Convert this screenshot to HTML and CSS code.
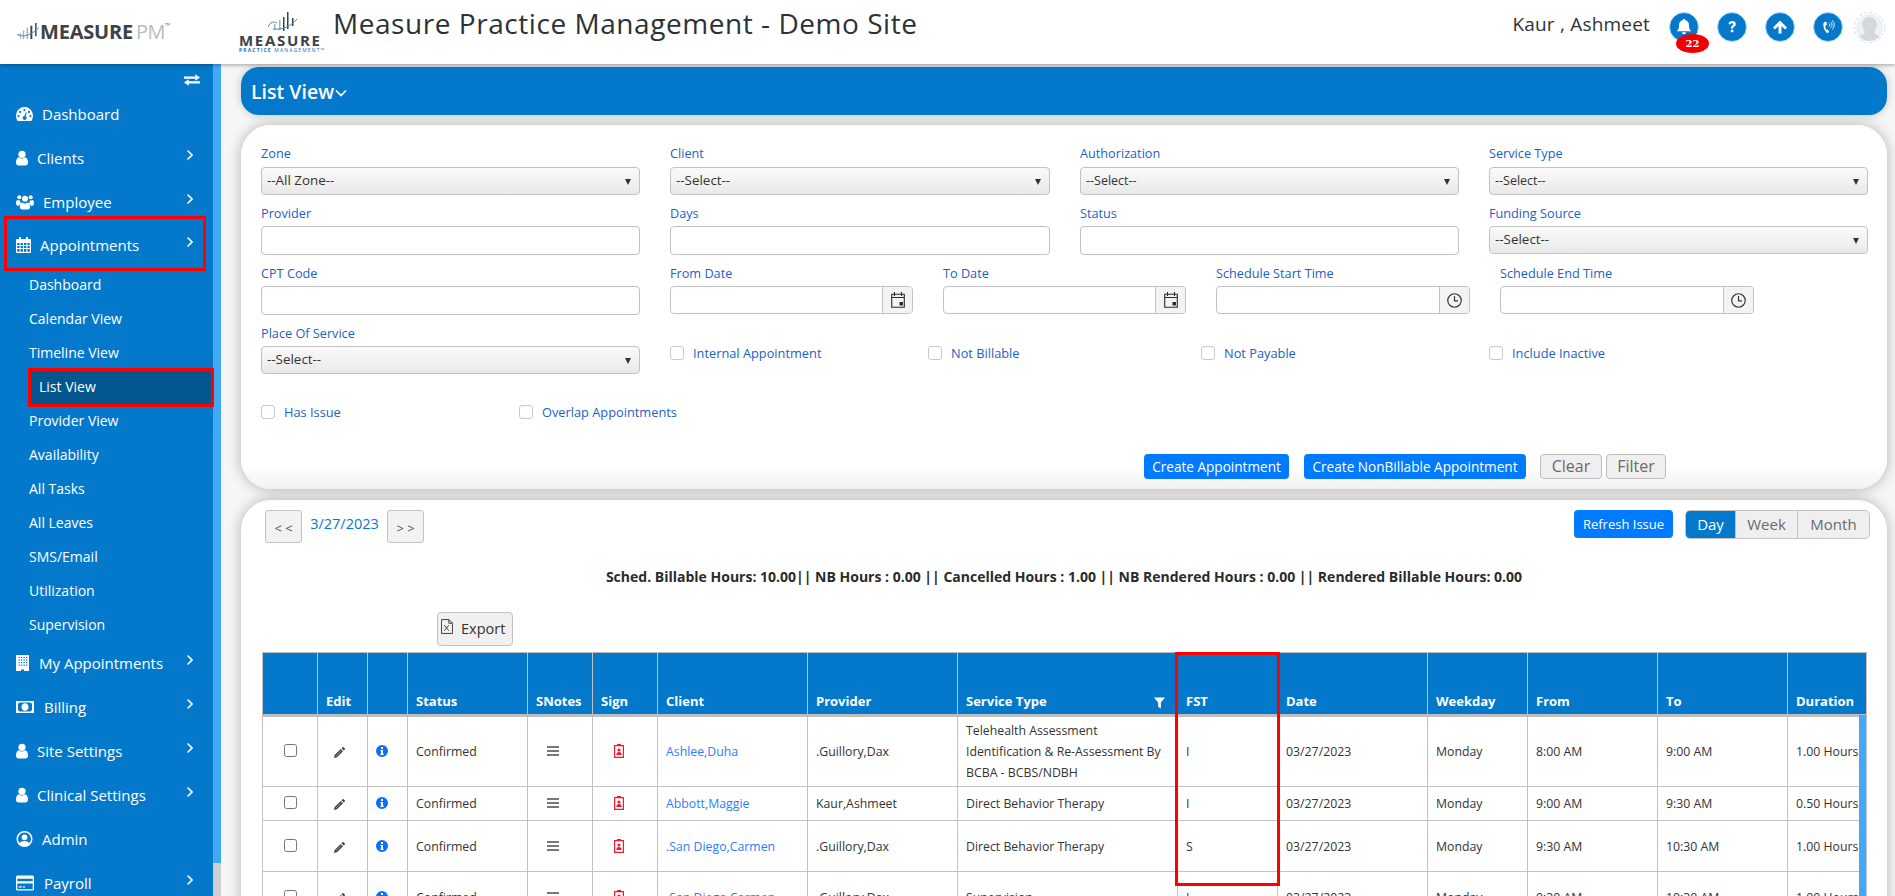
FILE: index.html
```html
<!DOCTYPE html>
<html lang="en">
<head>
<meta charset="utf-8">
<title>Measure Practice Management - List View</title>
<link rel="stylesheet" href="styles.css">
</head>
<body>
<svg class="defs" aria-hidden="true">
  <symbol id="i-user" viewBox="0 0 12 15"><circle cx="6" cy="3.8" r="3.6"/><path d="M0 12.2C0 9.3 1 7.2 3 6.8c.8.8 1.9 1.2 3 1.2s2.2-.4 3-1.2c2 .4 3 2.5 3 5.4 0 1.8-1.2 2.8-2.6 2.8H2.600C1.200 15 0 14 0 12.200z"/></symbol>
  <symbol id="i-users" viewBox="0 0 18 15"><circle cx="9" cy="4.200" r="3"/><circle cx="3.300" cy="2.800" r="2"/><circle cx="14.700" cy="2.800" r="2"/><path d="M0 8.500c0-2 .6-3 2-3 .6.500 1.500.8 2.200.5-.2 1.300.3 2.400 1.200 3.300C3.800 9.800 3 10.700 2.800 11.500 1 11.500 0 10.500 0 8.500zM18 8.500c0-2-.6-3-2-3-.6.500-1.500.8-2.200.5.200 1.300-.3 2.400-1.200 3.300 1.600.5 2.400 1.400 2.600 2.200 1.800 0 2.800-1 2.800-3zM3.800 12.500c0-2.500 1-4.300 2.500-4.500 1.500 1.200 3.900 1.200 5.400 0 1.500.2 2.500 2 2.500 4.500 0 1.600-1 2.500-2.300 2.500H6.100C4.800 15 3.800 14.100 3.800 12.500z"/></symbol>
  <symbol id="i-gauge" viewBox="0 0 17 14"><path fill-rule="evenodd" d="M8.500 0A8.500 8.500 0 0 0 0 8.500c0 2 .6 3.900 1.700 5.500h13.600c1.100-1.600 1.700-3.500 1.700-5.500A8.500 8.500 0 0 0 8.500 0zM8.500 2a1.100 1.100 0 1 1 0 2.200 1.100 1.100 0 0 1 0-2.200zM4 3.800a1.100 1.100 0 1 1 0 2.200 1.100 1.100 0 0 1 0-2.200zM13 3.800a1.100 1.100 0 1 1 0 2.200 1.100 1.100 0 0 1 0-2.200zM2.500 8a1.100 1.100 0 1 1 0 2.200 1.100 1.100 0 0 1 0-2.200zM14.500 8a1.100 1.100 0 1 1 0 2.200 1.100 1.100 0 0 1 0-2.200zM10.800 5.500 9.700 9.200a2 2 0 1 1-1.300-.3l1.400-3.700z"/></symbol>
  <symbol id="i-cal" viewBox="0 0 15 16"><path fill-rule="evenodd" d="M3 0h2v2h5V0h2v2h2a1 1 0 0 1 1 1v12a1 1 0 0 1-1 1H1a1 1 0 0 1-1-1V3a1 1 0 0 1 1-1h2zM1.200 6v2h2.400V6zM4.600 6v2h2.400V6zM8 6v2h2.400V6zM11.400 6v2h2.400V6zM1.200 9v2h2.400V9zM4.600 9v2h2.400V9zM8 9v2h2.400V9zM11.400 9v2h2.400V9zM1.200 12v2.800h2.400V12zM4.600 12v2.800h2.400V12zM8 12v2.800h2.400V12zM11.400 12v2.800h2.400V12z"/></symbol>
  <symbol id="i-building" viewBox="0 0 13 16"><path fill-rule="evenodd" d="M0 0h13v16H8v-1.500H5V16H0zM2.500 2v1.200h1.300V2zM5 2v1.200h1.300V2zM7.500 2v1.200h1.300V2zM10 2v1.200h1.300V2zM2.500 4.500v1.200h1.300V4.500zM5 4.500v1.200h1.300V4.500zM7.500 4.500v1.200h1.300V4.500zM10 4.500v1.200h1.300V4.500zM2.500 7v1.200h1.300V7zM5 7v1.200h1.300V7zM7.500 7v1.200h1.300V7zM10 7v1.200h1.300V7zM2.500 9.500v1.200h1.300V9.500zM5 9.500v1.200h1.300V9.500zM7.500 9.500v1.200h1.300V9.500zM10 9.500v1.200h1.300V9.500z"/></symbol>
  <symbol id="i-money" viewBox="0 0 18 12"><path fill-rule="evenodd" d="M0 0h18v12H0zM2 2.400v7.200a2 2 0 0 1 1.500 1h11a2 2 0 0 1 1.500-1V2.400a2 2 0 0 1-1.500-1h-11a2 2 0 0 1-1.500 1zM9 2.200c2 0 3.500 1.700 3.500 3.800S11 9.800 9 9.800 5.500 8.100 5.500 6 7 2.200 9 2.200z"/><path d="M8 4.200h1.600v3.200h.6v.9H7.800v-.9h.7V5.100H8z"/></symbol>
  <symbol id="i-circle-user" viewBox="0 0 16 16"><path fill-rule="evenodd" d="M8 0a8 8 0 1 1 0 16A8 8 0 0 1 8 0zM8 1.600a6.400 6.400 0 0 0-4.900 10.500C4 10.700 5.800 10 8 10s4 .7 4.900 2.100A6.400 6.400 0 0 0 8 1.600zM8 3.400a2.900 2.900 0 1 1 0 5.800 2.900 2.900 0 0 1 0-5.800z"/></symbol>
  <symbol id="i-card" viewBox="0 0 18 15"><path fill-rule="evenodd" d="M1.500 0h15A1.500 1.500 0 0 1 18 1.500v12a1.500 1.500 0 0 1-1.500 1.500h-15A1.500 1.500 0 0 1 0 13.500v-12A1.500 1.500 0 0 1 1.500 0zM1.300 3.200v2.600h15.400V3.200zM1.300 8v5.700h15.400V8zM2.800 10.800h3v1.200h-3zM7 10.800h2v1.200H7z"/></symbol>
  <symbol id="i-pencil" viewBox="0 0 12 12"><path d="M0 12l.7-3.200 6.700-6.700 2.500 2.500-6.700 6.700zM8.200 1.300 9.300.2c.3-.3.700-.3 1 0l1.500 1.500c.3.300.3.700 0 1l-1.100 1.100z"/><path d="M2 9.900 8 3.900" stroke="#bbb" stroke-width=".7" fill="none"/></symbol>
  <symbol id="i-info" viewBox="0 0 12 12"><path fill-rule="evenodd" d="M6 0a6 6 0 1 1 0 12A6 6 0 0 1 6 0zM5 2v2h2V2zM4.400 5v1.100H5v2.700h-.6V10h3.200V8.800H7V5z"/></symbol>
  <symbol id="i-sign" viewBox="0 0 10 14"><path fill-rule="evenodd" d="M0 1h3V0h4v1h3v13H0zM1.200 2.200v10.600h7.600V2.200z"/><circle cx="5" cy="6" r="1.600"/><path d="M2.300 11c0-2 1-3 2.700-3s2.700 1 2.700 3z"/></symbol>
  <symbol id="i-xls" viewBox="0 0 13 16"><path fill="none" stroke="currentColor" d="M.5.500h8l4 4v11H.5zM8.500.500v4h4"/><path fill="none" stroke="currentColor" d="M3.500 6.500l5 6M8.500 6.500l-5 6"/></symbol>
  <symbol id="i-dcal" viewBox="0 0 14 16"><path fill="none" stroke="#2b2b2b" stroke-width="1.100" d="M.7 2.200h12.600v13.100H.7zM3.500 0v4M10.500 0v4"/><path fill="#2b2b2b" d="M.7 5h12.600v1H.7zM8.500 10h3.500v3.500H8.500z"/></symbol>
  <symbol id="i-clock" viewBox="0 0 14 14"><circle cx="7" cy="7" r="6.300" fill="none" stroke="#333" stroke-width="1.100"/><path fill="none" stroke="#333" stroke-width="1.100" d="M7 2.800V7.400H10.300"/></symbol>
  <symbol id="i-chev" viewBox="0 0 6 10"><path fill="none" stroke="currentColor" stroke-width="1.600" stroke-linecap="round" d="M1 1l4 4-4 4"/></symbol>
  <symbol id="i-bars" viewBox="0 0 12 10"><path d="M0 0h12v2H0zM0 4h12v2H0zM0 8h12v2H0z"/></symbol>
</svg>

<header class="topbar">
  <div class="logo-pm">
    <svg class="logo-pm-mark" viewBox="0 0 24 20"><path class="mark-gray" d="M1 14l3-3v7H3v-4zM6 9h1.500v9H6zM10 6h1.500v12H10z"/><path class="mark-dark" d="M14 4h2v14h-2zM19 1h1.500v14H19z"/><path class="mark-line" d="M0 13c7 4 16 0 23-7" fill="none"/></svg>
    <span class="logo-pm-a">MEASURE</span><span class="logo-pm-b">PM</span><span class="logo-pm-tm">™</span>
  </div>
  <div class="logo-mp">
    <svg class="logo-mp-mark" viewBox="0 0 30 22"><path class="mark-gray" d="M6 12h1.500v6H6zM11 8h1.500v10H11z"/><path class="mark-dark" d="M15 5h1.500v14H15zM19 0h1.500v17H19zM24 6h1.500v8H24z"/><path class="mark-line" d="M0 15c2-5 6-6 9-4M5 17c9 1 17-2 24-10" fill="none"/></svg>
    <div class="logo-mp-a">MEASURE</div>
    <div class="logo-mp-b">PRACTICE <span>MANAGEMENT™</span></div>
  </div>
  <h1 class="site-title">Measure Practice Management - Demo Site</h1>
  <div class="user-name">Kaur , Ashmeet</div>
  <div class="top-icons">
    <div class="round-btn">
      <svg viewBox="0 0 16 16"><path d="M8 0c.7 0 1.100.5 1.100 1.100C11.500 1.700 13 3.700 13 6.200c0 4 1.200 4.800 2.200 6H.8c1-1.200 2.200-2 2.200-6 0-2.500 1.500-4.500 3.900-5.100C6.900.5 7.300 0 8 0zM6 13.200h4a2 2 0 0 1-4 0z"/></svg>
      <span class="badge">22</span>
    </div>
    <div class="round-btn"><svg viewBox="0 0 16 16"><path d="M4.500 5.300C4.600 3 6.200 2 8.200 2c2.200 0 3.600 1.300 3.600 3 0 1.500-.9 2.200-1.700 2.800-.7.500-.9.800-.9 1.700H6.900c0-1.500.4-2.200 1.300-2.900.7-.5 1-.9 1-1.400 0-.6-.4-1-1.100-1-.8 0-1.200.5-1.300 1.100zM6.800 10.700h2.500V13.200H6.800z"/></svg></div>
    <div class="round-btn"><svg viewBox="0 0 16 16"><path d="M8 1.500 15 8.500 13 10.500 9.500 7v7.500h-3V7L3 10.500 1 8.500z"/></svg></div>
    <div class="round-btn"><svg viewBox="0 0 16 16"><path d="M5.500 2.500 3.800 3.500C2.600 6.500 4 11 6.800 14l2-.6c.4-.2.400-.5.300-.8L8 10.700c-.2-.3-.4-.3-.7-.2l-.8.400c-.9-1.300-1.300-2.900-1-4.400l.9-.2c.3-.1.400-.3.400-.6l-.1-2.400c0-.3-.4-.5-.7-.3z"/><path class="ring" d="M9 4.500c1 .7 1 2.300 0 3M10.500 3c2 1.400 2 4.300 0 5.800M12 1.500c3 2.200 3 6.600 0 8.800"/></svg></div>
    <div class="avatar"><svg viewBox="0 0 28 28"><circle cx="14" cy="14" r="14" fill="#eef0f2"/><path fill="#d3d8dc" d="M14 3c4.500 0 7.500 3.500 7.500 8 0 3-1 5.500-3 7.500 0 1.500 1 2.200 3.500 3.200 1 .4 2 1 2.500 1.600A13.500 13.500 0 0 1 14 28a13.500 13.500 0 0 1-10.500-4.700c.5-.6 1.500-1.200 2.500-1.600 2.500-1 3.500-1.700 3.500-3.200-2-2-3-4.500-3-7.500C6.500 6.500 9.500 3 14 3z"/></svg></div>
  </div>
</header>

<div class="shell">
  <aside class="sidebar">
    <nav class="nav">
      <div class="nav-toggle"><svg viewBox="0 0 17 12"><path d="M0 2.200h12V0l5 3.400-5 3.400V4.600H0zM17 7.400H5V5.200L0 8.600 5 12V9.800h12z"/></svg></div>
      <a class="nav-item"><svg class="ni w17"><use href="#i-gauge"/></svg>Dashboard</a>
      <a class="nav-item"><svg class="ni w12"><use href="#i-user"/></svg>Clients<svg class="chev"><use href="#i-chev"/></svg></a>
      <a class="nav-item"><svg class="ni w18 tight"><use href="#i-users"/></svg>Employee<svg class="chev"><use href="#i-chev"/></svg></a>
      <a class="nav-item marked"><svg class="ni w15"><use href="#i-cal"/></svg>Appointments<svg class="chev"><use href="#i-chev"/></svg></a>
      <div class="sub">
        <a class="sub-item">Dashboard</a>
        <a class="sub-item">Calendar View</a>
        <a class="sub-item">Timeline View</a>
        <a class="sub-item active">List View</a>
        <a class="sub-item">Provider View</a>
        <a class="sub-item">Availability</a>
        <a class="sub-item">All Tasks</a>
        <a class="sub-item">All Leaves</a>
        <a class="sub-item">SMS/Email</a>
        <a class="sub-item">Utilization</a>
        <a class="sub-item">Supervision</a>
      </div>
      <a class="nav-item"><svg class="ni w13"><use href="#i-building"/></svg>My Appointments<svg class="chev"><use href="#i-chev"/></svg></a>
      <a class="nav-item"><svg class="ni w18"><use href="#i-money"/></svg>Billing<svg class="chev"><use href="#i-chev"/></svg></a>
      <a class="nav-item"><svg class="ni w12"><use href="#i-user"/></svg>Site Settings<svg class="chev"><use href="#i-chev"/></svg></a>
      <a class="nav-item"><svg class="ni w12"><use href="#i-user"/></svg>Clinical Settings<svg class="chev"><use href="#i-chev"/></svg></a>
      <a class="nav-item"><svg class="ni w17"><use href="#i-circle-user"/></svg>Admin</a>
      <a class="nav-item"><svg class="ni w18"><use href="#i-card"/></svg>Payroll<svg class="chev"><use href="#i-chev"/></svg></a>
    </nav>
    <div class="side-scroll"><div class="side-thumb"></div></div>
  </aside>

  <main class="main">
    <div class="page-bar">List View<svg class="bar-chev" viewBox="0 0 12 8"><path d="M1 1.500l5 5 5-5" fill="none" stroke="#fff" stroke-width="1.700"/></svg></div>

    <section class="card filter-card">
      <div class="f-row four first">
        <div class="field"><label>Zone</label><div class="sel">--All Zone--<i class="caret"></i></div></div>
        <div class="field"><label>Client</label><div class="sel">--Select--<i class="caret"></i></div></div>
        <div class="field"><label>Authorization</label><div class="sel sm">--Select--<i class="caret"></i></div></div>
        <div class="field"><label>Service Type</label><div class="sel sm">--Select--<i class="caret"></i></div></div>
      </div>
      <div class="f-row four">
        <div class="field"><label>Provider</label><div class="inp"></div></div>
        <div class="field"><label>Days</label><div class="inp"></div></div>
        <div class="field"><label>Status</label><div class="inp"></div></div>
        <div class="field"><label>Funding Source</label><div class="sel">--Select--<i class="caret"></i></div></div>
      </div>
      <div class="f-row dates">
        <div class="field"><label>CPT Code</label><div class="inp"></div></div>
        <div class="field"><label>From Date</label><div class="inp-group"><div class="grow"></div><div class="addon"><svg class="dcal"><use href="#i-dcal"/></svg></div></div></div>
        <div class="field"><label>To Date</label><div class="inp-group"><div class="grow"></div><div class="addon"><svg class="dcal"><use href="#i-dcal"/></svg></div></div></div>
        <div class="field"><label>Schedule Start Time</label><div class="inp-group"><div class="grow"></div><div class="addon"><svg class="clock"><use href="#i-clock"/></svg></div></div></div>
        <div class="field"><label>Schedule End Time</label><div class="inp-group"><div class="grow"></div><div class="addon"><svg class="clock"><use href="#i-clock"/></svg></div></div></div>
      </div>
      <div class="f-row checks">
        <div class="field"><label>Place Of Service</label><div class="sel">--Select--<i class="caret"></i></div></div>
        <label class="chk"><input type="checkbox">Internal Appointment</label>
        <label class="chk"><input type="checkbox">Not Billable</label>
        <label class="chk"><input type="checkbox">Not Payable</label>
        <label class="chk"><input type="checkbox">Include Inactive</label>
      </div>
      <div class="f-row issue">
        <label class="chk"><input type="checkbox">Has Issue</label>
        <label class="chk"><input type="checkbox">Overlap Appointments</label>
      </div>
      <div class="actions">
        <button class="btn primary">Create Appointment</button>
        <button class="btn primary">Create NonBillable Appointment</button>
        <button class="btn plain">Clear</button>
        <button class="btn plain">Filter</button>
      </div>
    </section>

    <section class="card list-card">
      <div class="list-top">
        <button class="pager">&lt; &lt;</button>
        <span class="cur-date">3/27/2023</span>
        <button class="pager next">&gt; &gt;</button>
        <button class="btn primary refresh">Refresh Issue</button>
        <div class="seg"><span class="on">Day</span><span>Week</span><span>Month</span></div>
      </div>
      <div class="summary">Sched. Billable Hours: 10.00|| NB Hours : 0.00 || Cancelled Hours : 1.00 || NB Rendered Hours : 0.00 || Rendered Billable Hours: 0.00</div>
      <button class="export"><svg class="xls"><use href="#i-xls"/></svg>Export</button>
      <div class="table-wrap">
        <table class="grid">
          <colgroup>
            <col class="c55"><col class="c50"><col class="c40"><col class="c120"><col class="c65"><col class="c65"><col class="c150"><col class="c150"><col class="c220"><col class="c100"><col class="c150"><col class="c100"><col class="c130"><col class="c130"><col class="c79">
          </colgroup>
          <thead>
            <tr><th></th><th>Edit</th><th></th><th>Status</th><th>SNotes</th><th>Sign</th><th>Client</th><th>Provider</th><th><div class="th-flex">Service Type<svg class="funnel" viewBox="0 0 12 12"><path d="M0 0h12L7.500 5.500V12L4.500 10V5.500z"/></svg></div></th><th>FST</th><th>Date</th><th>Weekday</th><th>From</th><th>To</th><th>Duration</th></tr>
          </thead>
          <tbody>
            <tr class="r71"><td class="ctr"><input type="checkbox"></td><td class="ctr"><svg class="pencil"><use href="#i-pencil"/></svg></td><td class="ctr"><svg class="info"><use href="#i-info"/></svg></td><td>Confirmed</td><td class="ctr"><svg class="bars"><use href="#i-bars"/></svg></td><td class="ctr"><svg class="sign"><use href="#i-sign"/></svg></td><td><a class="lnk">Ashlee,Duha</a></td><td>.Guillory,Dax</td><td>Telehealth Assessment Identification &amp; Re-Assessment By BCBA - BCBS/NDBH</td><td>I</td><td>03/27/2023</td><td>Monday</td><td>8:00 AM</td><td>9:00 AM</td><td>1.00 Hours</td></tr>
            <tr class="r34"><td class="ctr"><input type="checkbox"></td><td class="ctr"><svg class="pencil"><use href="#i-pencil"/></svg></td><td class="ctr"><svg class="info"><use href="#i-info"/></svg></td><td>Confirmed</td><td class="ctr"><svg class="bars"><use href="#i-bars"/></svg></td><td class="ctr"><svg class="sign"><use href="#i-sign"/></svg></td><td><a class="lnk">Abbott,Maggie</a></td><td>Kaur,Ashmeet</td><td>Direct Behavior Therapy</td><td>I</td><td>03/27/2023</td><td>Monday</td><td>9:00 AM</td><td>9:30 AM</td><td>0.50 Hours</td></tr>
            <tr class="r50"><td class="ctr"><input type="checkbox"></td><td class="ctr"><svg class="pencil"><use href="#i-pencil"/></svg></td><td class="ctr"><svg class="info"><use href="#i-info"/></svg></td><td>Confirmed</td><td class="ctr"><svg class="bars"><use href="#i-bars"/></svg></td><td class="ctr"><svg class="sign"><use href="#i-sign"/></svg></td><td><a class="lnk">.San Diego,Carmen</a></td><td>.Guillory,Dax</td><td>Direct Behavior Therapy</td><td>S</td><td>03/27/2023</td><td>Monday</td><td>9:30 AM</td><td>10:30 AM</td><td>1.00 Hours</td></tr>
            <tr class="r50"><td class="ctr"><input type="checkbox"></td><td class="ctr"><svg class="pencil"><use href="#i-pencil"/></svg></td><td class="ctr"><svg class="info"><use href="#i-info"/></svg></td><td>Confirmed</td><td class="ctr"><svg class="bars"><use href="#i-bars"/></svg></td><td class="ctr"><svg class="sign"><use href="#i-sign"/></svg></td><td><a class="lnk">.San Diego,Carmen</a></td><td>.Guillory,Dax</td><td>Supervision</td><td>I</td><td>03/27/2023</td><td>Monday</td><td>9:30 AM</td><td>10:30 AM</td><td>1.00 Hours</td></tr>
          </tbody>
        </table>
        <div class="fst-mark"></div>
        <div class="table-scroll"></div>
      </div>
    </section>
  </main>
</div>
</body>
</html>
```

FILE: styles.css
```css
* { box-sizing: border-box; }
html, body { margin: 0; height: 896px; overflow: hidden; }
body { font-family: "Open Sans", "Noto Sans", sans-serif; background: #f6f6f6; color: #333; display: flex; flex-direction: column; }
.defs { position: absolute; width: 0; height: 0; }

/* top bar */
.topbar { height: 64px; flex: none; background: #fff; display: flex; align-items: flex-start; position: relative; z-index: 3; box-shadow: 0 1px 4px rgba(0,0,0,.35); }
.logo-pm { margin: 21px 0 0 17px; width: 222px; height: 20px; display: flex; align-items: center; font-weight: 700; }
.logo-pm-mark { width: 23px; height: 19px; flex: none; }
.logo-pm-a { font-size: 20px; color: #3b4248; letter-spacing: -.2px; }
.logo-pm-b { font-size: 20px; color: #b9bdc0; margin-left: 3px; letter-spacing: -.6px; font-weight: 400; }
.logo-pm-tm { font-size: 7px; color: #888; align-self: flex-start; }
.mark-gray { fill: #a8adb2; }
.mark-dark { fill: #3b4248; }
.mark-line { stroke: #3a8cc8; stroke-width: 1; }
.logo-mp { width: 94px; margin-top: 12px; flex: none; }
.logo-mp-mark { display: block; width: 30px; height: 22px; margin-left: 29px; }
.logo-mp-a { font-size: 15px; font-weight: 700; color: #3b4248; line-height: 13px; letter-spacing: 1.7px; }
.logo-mp-b { font-size: 5px; font-weight: 700; color: #1f6fb5; line-height: 7px; letter-spacing: 1.15px; white-space: nowrap; }
.logo-mp-b span { font-weight: 400; }
.site-title { margin: 4px 0 0 0; font-size: 28px; line-height: 38px; font-weight: 400; color: #2a3238; letter-spacing: .55px; white-space: nowrap; }
.user-name { margin-left: auto; margin-top: 12px; font-size: 19px; line-height: 25px; color: #2f3338; letter-spacing: .2px; white-space: nowrap; }
.top-icons { display: flex; margin: 12px 10px 0 19px; }
.round-btn { position: relative; width: 30px; height: 30px; margin-right: 18px; border-radius: 50%; background: #0479cc; border: 1px solid #bcdcf3; display: flex; align-items: center; justify-content: center; }
.round-btn svg { width: 16px; height: 16px; fill: #fff; }
.round-btn .ring { fill: none; stroke: #fff; stroke-width: .9; }
.badge { position: absolute; left: 6px; top: 21px; width: 33px; height: 19px; border-radius: 50%; background: #f20000; color: #fff; font: 700 10px/19px "DejaVu Serif", serif; text-align: center; }
.avatar { width: 31px; height: 31px; margin: 0 0 0 -7px; border-radius: 50%; border: 1px dashed #c9e0f2; padding: 1px; }
.avatar svg { display: block; width: 27px; height: 27px; }

.shell { flex: 1; min-height: 0; display: flex; }

/* sidebar */
.sidebar { width: 221px; flex: none; display: flex; background: #0479cc; color: #fff; overflow: hidden; }
.nav { width: 213px; flex: none; }
.nav-toggle { height: 28px; padding: 10px 0 0 184px; }
.nav-toggle svg { display: block; width: 16px; height: 12px; fill: #fff; }
.nav-item { position: relative; display: flex; align-items: center; height: 44px; padding: 0 20px 0 16px; font-size: 15px; white-space: nowrap; color: #fff; }
.marked { padding-bottom: 2px; }
.ni { flex: none; height: 16px; margin-right: 10px; fill: #fff; }
.w12 { width: 12px; margin-right: 9px; }
.w13 { width: 13px; margin-right: 10px; }
.w15 { width: 15px; margin-right: 9px; }
.w17 { width: 17px; margin-right: 9px; }
.w18 { width: 18px; }
.tight { margin-right: 9px; }
.chev { width: 6px; height: 10px; margin-left: auto; margin-top: -6px; color: #fff; }
.marked::after { content: ""; position: absolute; left: 4px; right: 7px; top: -8px; bottom: -3px; border: 3px solid #f00; }
.sub { margin-bottom: -1px; }
.sub-item { display: block; position: relative; height: 34px; line-height: 34px; padding-left: 29px; font-size: 14px; color: #fff; }
.sub-item.active { margin: 0 0 0 28px; padding-left: 11px; background: #04568e; }
.sub-item.active::after { content: ""; position: absolute; left: 0; right: -1px; top: -2px; bottom: -3px; border: 3px solid #f00; }
.side-scroll { width: 8px; flex: none; background: #cfcfcf; }
.side-thumb { height: 799px; background: #42a9f5; }

/* main */
.main { flex: 1; min-width: 0; padding: 3px 8px 0 20px; overflow: hidden; }
.page-bar { height: 48px; border-radius: 18px; background: #0479cc; color: #fff; font-size: 19.5px; font-weight: 600; line-height: 47px; padding-left: 10px; display: flex; align-items: center; box-shadow: 0 0 10px rgba(0,0,0,.2); }
.bar-chev { width: 12px; height: 8px; margin-left: 1px; margin-top: 3px; }
.card { background: #fff; border-radius: 30px; box-shadow: 0 0 14px rgba(0,0,0,.28); }
.filter-card { height: 364px; margin-top: 10px; padding: 19px 0 0 20px; background: linear-gradient(#fff 340px, #f2f2f2); }
.f-row { display: grid; height: 60px; }
.first label { margin-bottom: 5px; }
.four { grid-template-columns: 379px 380px 379px 379px; column-gap: 30px; }
.dates { grid-template-columns: 379px 243px 243px 254px 254px; column-gap: 30px; }
.checks { grid-template-columns: 379px 228px 243px 258px auto; column-gap: 30px; }
.issue { grid-template-columns: 258px auto; height: auto; padding-top: 19px; }
.field label { display: block; height: 18px; font-size: 12.7px; line-height: 18px; color: #1b5fc9; margin-bottom: 4px; white-space: nowrap; }
.first .field label { margin-bottom: 5px; }
.sel { position: relative; height: 28px; border: 1px solid #c2c2c2; border-radius: 4px; background: linear-gradient(#fafafa, #e9e9e9); font-size: 13.4px; line-height: 25px; padding-left: 5px; color: #333; }
.sel.sm { font-size: 12.5px; }
.caret { position: absolute; right: 8px; top: 11px; width: 0; height: 0; border: 3.5px solid transparent; border-top: 6px solid #333; border-bottom: 0; }
.inp { height: 29px; border: 1px solid #c2c2c2; border-radius: 4px; background: #fff; }
.inp-group { display: flex; height: 28px; border: 1px solid #c2c2c2; border-radius: 4px; overflow: hidden; }
.grow { flex: 1; }
.addon { width: 30px; background: #f3f3f3; border-left: 1px solid #c2c2c2; display: flex; align-items: center; justify-content: center; }
.dcal { width: 14px; height: 16px; }
.clock { width: 15px; height: 15px; }
.chk { display: flex; align-items: center; height: 18px; font-size: 12.8px; color: #1b5fc9; white-space: nowrap; }
.checks .chk { margin-top: 20px; }
.chk input { appearance: none; width: 14px; height: 14px; margin: 0 9px 0 0; border: 1px solid #c9c9c9; border-radius: 3px; background: #fff; }
.actions { display: flex; margin-top: 33px; padding-left: 883px; }
.btn { height: 25px; border-radius: 4px; font: 13.6px/23px "Open Sans", sans-serif; padding: 0; white-space: nowrap; }
.primary { border: 0; background: #007bff; color: #fff; }
.actions .primary:nth-child(1) { width: 145px; margin-right: 15px; }
.actions .primary:nth-child(2) { width: 222px; margin-right: 14px; }
.plain { border: 1px solid #bdbdbd; background: #efefef; color: #6a6a6a; font-size: 16px; line-height: 20px; padding-bottom: 2px; }
.actions .plain:nth-child(3) { width: 62px; margin-right: 4px; }
.actions .plain:nth-child(4) { width: 60px; }

/* list */
.list-card { height: 420px; margin-top: 11px; padding: 10px 0 0 21px; border-radius: 30px 30px 0 0; overflow: hidden; }
.list-top { display: flex; align-items: flex-start; height: 33px; padding-left: 3px; }
.pager { width: 37px; height: 33px; border: 1px solid #c2c2c2; border-radius: 3px; background: #f2f2f2; color: #555; font: 13px/1 "Open Sans", sans-serif; padding: 4px 0 0; }
.cur-date { width: 85px; text-align: center; font-size: 14.5px; line-height: 28px; color: #0479cc; }
.refresh { width: 99px; height: 28px; margin-left: auto; font-size: 13px; }
.seg { display: flex; margin: 0 17px 0 12px; height: 29px; border: 1px solid #c2c2c2; border-radius: 5px; overflow: hidden; font-size: 15px; line-height: 27px; color: #6a6a6a; background: #efefef; }
.seg span { width: 62px; text-align: center; border-left: 1px solid #c2c2c2; }
.seg .on { width: 49px; background: #0479cc; color: #fff; border-left: 0; }
.seg span:last-child { width: 72px; }
.summary { margin: 24px 0 0 0; padding-right: 21px; height: 20px; line-height: 20px; text-align: center; font-size: 14px; font-weight: 700; color: #2b2b2b; white-space: nowrap; }
.export { display: flex; align-items: center; margin: 25px 0 0 175px; width: 76px; height: 34px; border: 1px solid #c2c2c2; border-radius: 4px; background: #f0f0f0; font: 14.5px/1 "Open Sans", sans-serif; color: #333; padding: 0 0 0 3px; }
.xls { width: 12px; height: 15px; margin: -6px 8px 0 0; color: #333; }
.table-wrap { position: relative; width: 1604px; margin-top: 6px; }
.grid { table-layout: fixed; width: 1604px; border-collapse: collapse; font-size: 12.3px; color: #333; }
.c55 { width: 55px; } .c50 { width: 50px; } .c40 { width: 40px; } .c120 { width: 120px; } .c65 { width: 65px; } .c150 { width: 150px; } .c220 { width: 220px; } .c100 { width: 100px; } .c130 { width: 130px; } .c79 { width: 79px; }
.grid th { height: 63px; background: #0479cc; color: #fff; font-size: 13px; font-weight: 700; text-align: left; vertical-align: bottom; padding: 0 7px 4px 8px; border: 1px solid #c2c2c2; border-top: 1px solid #bbb; border-bottom: 3px solid #bdbdbd; white-space: nowrap; }
.grid td { border: 1px solid #c2c2c2; padding: 0 7px 0 8px; line-height: 21px; vertical-align: middle; }
.r71 td { height: 71px; }
.r34 td { height: 34px; }
.r50 td { height: 51px; }
.ctr { text-align: center; }
.ctr input { margin: 0; width: 13px; height: 13px; vertical-align: -1px; }
.th-flex { display: flex; justify-content: space-between; align-items: flex-end; padding-right: 5px; }
.funnel { width: 11px; height: 12px; fill: #fff; margin-bottom: 1px; }
.pencil { width: 11px; height: 11px; fill: #444; margin-right: 8px; vertical-align: -2px; }
.info { width: 12px; height: 12px; fill: #0d6efd; margin-right: 12px; vertical-align: -1px; }
.bars { width: 12px; height: 10px; fill: #777; margin-right: 15px; }
.sign { width: 10px; height: 14px; fill: #f01c2c; margin-right: 14px; vertical-align: -2px; }
.lnk { color: #2f7bff; }
.fst-mark { position: absolute; left: 913px; top: 0; width: 105px; height: 234px; border: 3px solid #f00; }
.table-scroll { position: absolute; right: 0; top: 63px; bottom: 0; width: 7px; background: #42a9f5; }
```
